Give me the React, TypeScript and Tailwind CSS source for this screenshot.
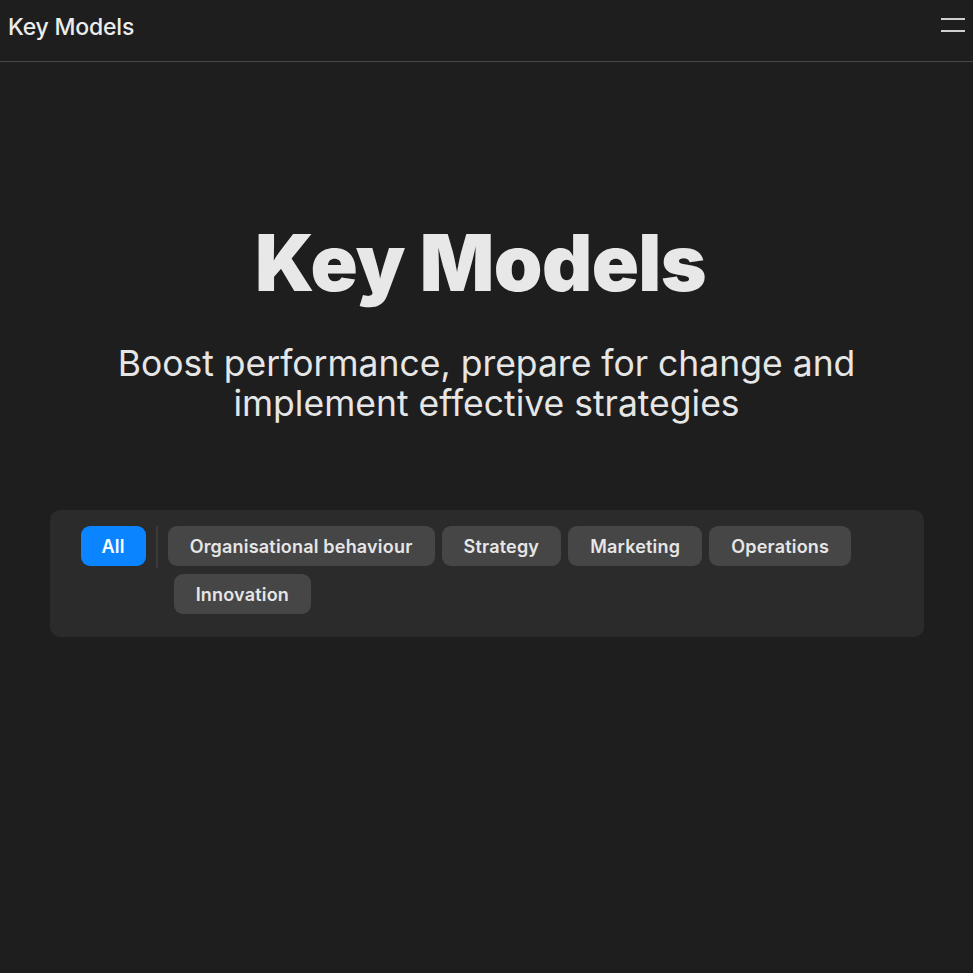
export default function App() {
  const cats = ["Organisational behaviour", "Strategy", "Marketing", "Operations"];
  return (
    <div
      className="min-h-screen bg-[#1e1e1e] text-[#e8e8e8]"
      style={{ fontFamily: "Inter, 'Noto Sans', sans-serif" }}
    >
      <header className="h-[62px] flex items-center justify-between pl-[8px] pr-[8px] border-b border-[#484848]">
        <div className="text-[23px] font-medium tracking-[-0.2px] text-[#ececec] -mt-[6px]">Key Models</div>
        <button className="flex flex-col gap-[10px] w-[24px] -mt-[12px]">
          <span className="block h-[2px] w-[24px] bg-[#cfcfcf]" />
          <span className="block h-[2px] w-[24px] bg-[#cfcfcf]" />
        </button>
      </header>
      <main className="flex flex-col items-center">
        <h1 className="mt-[162px] mr-[12px] text-[78px] leading-none font-black tracking-[-0.6px] text-[#e8e8e8]">
          Key Models
        </h1>
        <p className="mt-[42px] text-[35.5px] leading-[40px] font-normal text-center text-[#e6e6e6] w-[800px]">
          Boost performance, prepare for change and
          <br />
          implement effective strategies
        </p>
        <div className="mt-[86px] w-[874px] bg-[#2b2b2b] rounded-[10px] pl-[31px] pr-[32px] pt-[16px] pb-[23px] flex items-start">
          <button className="h-[40px] px-[21px] rounded-[9px] bg-[#0a84ff] text-white text-[18px] tracking-[0.2px] font-semibold">
            All
          </button>
          <div className="w-[2px] h-[42px] bg-[#3a3a3a] ml-[10px] mr-[10px]" />
          <div className="flex flex-wrap gap-x-[7px] gap-y-[8px] flex-1">
            {cats.map((c) => (
              <button
                key={c}
                className="h-[40px] px-[22px] rounded-[9px] bg-[#464646] text-[#e6e6e6] text-[18px] tracking-[0.2px] font-semibold"
              >
                {c}
              </button>
            ))}
            <button className="h-[40px] px-[22px] ml-[6px] rounded-[9px] bg-[#464646] text-[#e6e6e6] text-[18px] tracking-[0.2px] font-semibold">
              Innovation
            </button>
          </div>
        </div>
      </main>
    </div>
  );
}
